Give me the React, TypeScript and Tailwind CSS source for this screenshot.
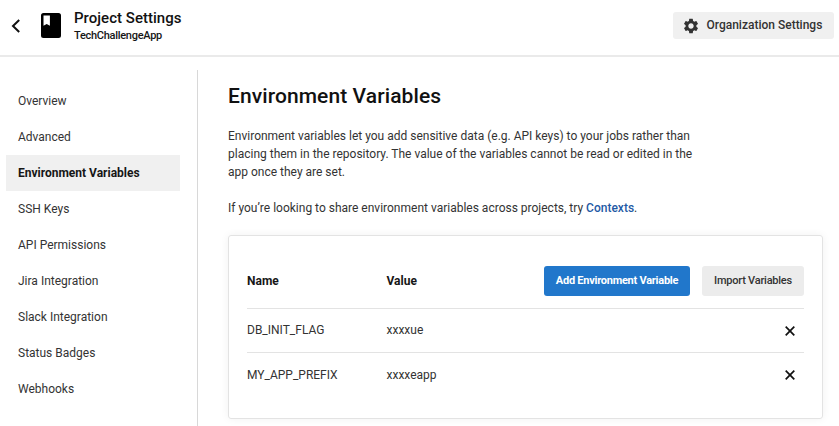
const navItems = [
  "Overview",
  "Advanced",
  "Environment Variables",
  "SSH Keys",
  "API Permissions",
  "Jira Integration",
  "Slack Integration",
  "Status Badges",
  "Webhooks",
];

const variables = [
  { name: "DB_INIT_FLAG", value: "xxxxue" },
  { name: "MY_APP_PREFIX", value: "xxxxeapp" },
];

function CloseIcon() {
  return (
    <svg viewBox="0 0 10 10" className="h-2.5 w-2.5" fill="none" stroke="#111" strokeWidth="1.7">
      <path d="M0.7 0.7 9.3 9.3M9.3 0.7 0.7 9.3" />
    </svg>
  );
}

function Header() {
  return (
    <header className="flex h-[57px] items-start border-b-2 border-[#eaeaea]">
      <svg viewBox="0 0 10 14" className="mt-[18.5px] ml-[11px] h-3.5 w-2.5 shrink-0" fill="none" stroke="#111" strokeWidth="2">
        <path d="M8.2 1 2 7l6.2 6" />
      </svg>
      <svg viewBox="0 0 20 25" className="mt-[13px] ml-5 h-[25px] w-5 shrink-0">
        <path
          fill="#000"
          fillRule="evenodd"
          d="M2.5 0h15A2.5 2.5 0 0 1 20 2.5v20a2.5 2.5 0 0 1-2.5 2.5h-15A2.5 2.5 0 0 1 0 22.5v-20A2.5 2.5 0 0 1 2.5 0ZM2.5 2.5v10.3l3.2-1.9 3.2 1.9v-10.3Z"
        />
      </svg>
      <div className="ml-[13px]">
        <h1 className="mt-[9px] text-[15px] leading-[18px] font-medium tracking-[0.03px] text-[#111]">Project Settings</h1>
        <p className="mt-px text-[11px] leading-4 font-medium tracking-[-0.28px] text-[#161616]">TechChallengeApp</p>
      </div>
      <button className="mt-3 mr-[5px] ml-auto flex h-[27px] w-[161px] items-center rounded-[3px] bg-[#f0f0f0] pl-[9px] text-[12px] font-medium whitespace-nowrap text-[#333]">
        <svg viewBox="0 0 24 24" className="h-[18px] w-[18px]" fill="#333">
          <path d="M19.140 12.940c.040-.300.060-.610.060-.940 0-.320-.020-.640-.070-.940l2.030-1.580a.49.49 0 0 0 .120-.610l-1.920-3.320a.488.488 0 0 0-.590-.220l-2.390.960c-.500-.380-1.030-.700-1.620-.940l-.360-2.540a.484.484 0 0 0-.480-.410h-3.840c-.240 0-.430.170-.470.410l-.360 2.540c-.590.240-1.130.570-1.620.940l-2.390-.960c-.220-.080-.470 0-.590.220L2.740 8.870c-.120.210-.080.470.120.610l2.030 1.580c-.050.300-.090.630-.090.940s.020.640.070.940l-2.030 1.580a.49.49 0 0 0-.120.610l1.920 3.320c.120.220.370.290.590.220l2.390-.960c.500.380 1.030.700 1.620.940l.360 2.540c.050.240.240.410.480.410h3.840c.240 0 .440-.170.470-.410l.360-2.540c.590-.240 1.130-.560 1.620-.940l2.390.960c.220.080.470 0 .590-.220l1.920-3.320c.120-.220.070-.470-.120-.610l-2.010-1.580zM12 15.600c-1.980 0-3.600-1.620-3.600-3.600s1.620-3.600 3.600-3.600 3.600 1.620 3.600 3.600-1.620 3.600-3.600 3.600z" />
        </svg>
        <span className="-mt-px ml-[6.500px]">Organization Settings</span>
      </button>
    </header>
  );
}

export default function App() {
  return (
    <div className="h-[426px] w-[839px] overflow-hidden bg-white font-[Roboto,'Liberation_Sans',sans-serif] text-[12px] text-[#333]">
      <Header />
      <div className="flex h-[369px] items-start">
        <nav className="mt-[26px] ml-1.5 w-[174px] shrink-0">
          {navItems.map((item) => (
            <a
              key={item}
              className={
                item === "Environment Variables"
                  ? "flex h-9 items-center bg-[#f0f0f0] pl-3 font-bold text-[#161616]"
                  : "flex h-9 items-center pl-3"
              }
            >
              {item}
            </a>
          ))}
        </nav>
        <main className="mt-[13px] ml-[17px] h-[356px] border-l border-[#d8d8d8] pl-[30px]">
          <h2 className="pt-3 text-[21px] leading-7 font-medium tracking-[0.09px] text-[#111]">Environment Variables</h2>
          <div className="mt-[17px] leading-[18px] whitespace-nowrap">
            <p>
              Environment variables let you add sensitive data (e.g. API keys) to your jobs rather than
              <br />
              placing them in the repository. The value of the variables cannot be read or edited in the
              <br />
              app once they are set.
            </p>
            <p className="mt-[18px]">
              If you’re looking to share environment variables across projects, try{" "}
              <a className="font-medium text-[#1f5aa5]">Contexts</a>.
            </p>
          </div>
          <section className="mt-[18px] h-[184px] w-[595px] rounded-[3px] border border-[#e3e3e3] px-[18px] pt-[30px] shadow-[0_0_8px_rgba(0,0,0,0.06)]">
            <div className="flex h-[43px] items-start border-b border-[#e3e3e3]">
              <div className="w-[139.5px] leading-[30px] font-bold text-[#161616]">Name</div>
              <div className="leading-[30px] font-bold text-[#161616]">Value</div>
              <button className="ml-auto h-[30px] w-[146px] rounded-[3px] bg-[#2177cb] text-[11px] font-bold tracking-[-0.25px] whitespace-nowrap text-white">
                Add Environment Variable
              </button>
              <button className="ml-3 h-[30px] w-[102px] rounded-[3px] bg-[#ececec] text-[11px] font-medium tracking-[-0.23px] whitespace-nowrap text-[#333]">
                Import Variables
              </button>
            </div>
            {variables.map((variable) => (
              <div key={variable.name} className="flex h-11 items-center border-b border-[#e3e3e3] last:border-b-0">
                <div className="w-[139.5px] pb-px">{variable.name}</div>
                <div className="pb-px">{variable.value}</div>
                <button className="mr-[9px] ml-auto">
                  <CloseIcon />
                </button>
              </div>
            ))}
          </section>
        </main>
      </div>
    </div>
  );
}
